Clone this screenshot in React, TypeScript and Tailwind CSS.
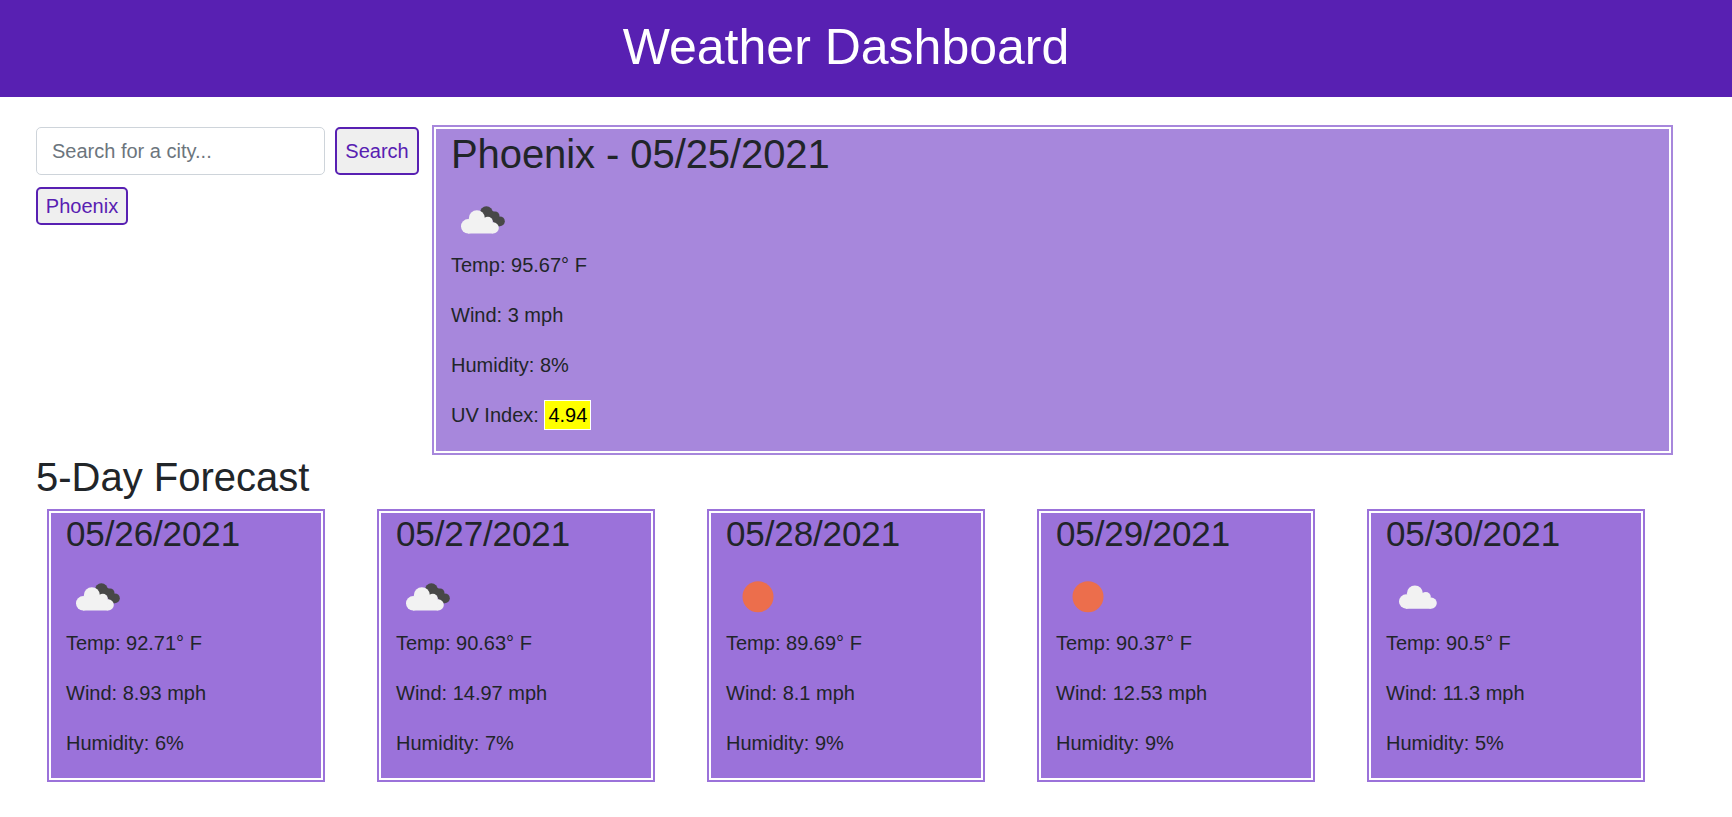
type Icon = "broken" | "cloud" | "sun";

type Day = { date: string; icon: Icon; temp: string; wind: string; humidity: string };

const days: Day[] = [
  { date: "05/26/2021", icon: "broken", temp: "92.71", wind: "8.93", humidity: "6" },
  { date: "05/27/2021", icon: "broken", temp: "90.63", wind: "14.97", humidity: "7" },
  { date: "05/28/2021", icon: "sun", temp: "89.69", wind: "8.1", humidity: "9" },
  { date: "05/29/2021", icon: "sun", temp: "90.37", wind: "12.53", humidity: "9" },
  { date: "05/30/2021", icon: "cloud", temp: "90.5", wind: "11.3", humidity: "5" },
];

function Cloud() {
  return (
    <g fill="#f2f2f2">
      <circle cx="17.2" cy="38.3" r="7.2" />
      <circle cx="25.9" cy="30.2" r="8" />
      <circle cx="36.8" cy="33.8" r="5" />
      <circle cx="42.2" cy="39.9" r="5.6" />
      <path d="M17 45.5V32h10l7-2 7 5 1 10.5z" />
    </g>
  );
}

function WeatherIcon({ icon }: { icon: Icon }) {
  return (
    <svg className="block h-[63px] w-[63px]" viewBox="0 0 63 63">
      {icon === "sun" && <circle cx="32" cy="31.8" r="15.5" fill="#ec6e4c" />}
      {icon === "cloud" && (
        <g transform="translate(3 -1.8)">
          <Cloud />
        </g>
      )}
      {icon === "broken" && (
        <>
          <g fill="#484848">
            <circle cx="35.4" cy="24.8" r="6.5" />
            <circle cx="44.2" cy="27.9" r="4.3" />
            <circle cx="48.9" cy="33.3" r="4.9" />
            <path d="M32 28l7-6 5 2 4 5 1 9.2h-4l-5-8z" />
          </g>
          <Cloud />
        </>
      )}
    </svg>
  );
}

function Readings({ temp, wind, humidity }: { temp: string; wind: string; humidity: string }) {
  return (
    <>
      <p className="mb-5">Temp: {temp}° F</p>
      <p className="mb-5">Wind: {wind} mph</p>
      <p className="mb-5">Humidity: {humidity}%</p>
    </>
  );
}

export default function App() {
  return (
    <div className="min-h-screen bg-white font-['Liberation_Sans',Arial,sans-serif] text-[20px] leading-[30px] text-[#212529]">
      <header className="h-[97px] bg-[#5820b2] pt-[17px] pr-10 text-center text-white">
        <h1 className="text-[50px] leading-[60px]">Weather Dashboard</h1>
      </header>

      <main className="pl-9">
        <div className="flex pt-7">
          <aside className="w-[396px] pt-0.5">
            <form className="flex gap-2.5" onSubmit={(e) => e.preventDefault()}>
              <input
                className="h-12 w-[289px] rounded-[5px] border border-[#ced4da] px-[15px] placeholder:text-[#6c757d]"
                placeholder="Search for a city..."
              />
              <button className="h-12 w-[84px] rounded-[5px] border-2 border-[#5820b2] bg-[#efefef] text-[#5820b2]">
                Search
              </button>
            </form>
            <button className="mt-3 block h-[38px] w-[92px] rounded-[5px] border-2 border-[#5820b2] bg-[#efefef] text-[#5820b2]">
              Phoenix
            </button>
          </aside>

          <section className="h-[330px] w-[1241px] border-2 border-[#a787dc] p-0.5">
            <div className="h-full bg-[#a787dc] px-[15px] pt-px">
              <h2 className="mb-2.5 text-[40px] leading-[48px] tracking-[-0.08px]">Phoenix - 05/25/2021</h2>
              <div className="-mb-px">
                <WeatherIcon icon="broken" />
              </div>
              <Readings temp="95.67" wind="3" humidity="8" />
              <p>
                UV Index:{" "}
                <span className="border border-white bg-[#ffff00] p-[3px] text-black">4.94</span>
              </p>
            </div>
          </section>
        </div>

        <h2 className="-mt-0.5 mb-2 text-[40px] leading-[48px]">5-Day Forecast</h2>
        <div className="flex gap-[52px] pl-[11px]">
          {days.map((d) => (
            <section key={d.date} className="h-[273px] w-[278px] border-2 border-[#9b72da] p-0.5">
              <div className="h-full bg-[#9b72da] px-[15px]">
                <h3 className="mb-2.5 text-[35px] leading-[42px] tracking-[-0.12px]">{d.date}</h3>
                <WeatherIcon icon={d.icon} />
                <Readings temp={d.temp} wind={d.wind} humidity={d.humidity} />
              </div>
            </section>
          ))}
        </div>
      </main>
    </div>
  );
}
